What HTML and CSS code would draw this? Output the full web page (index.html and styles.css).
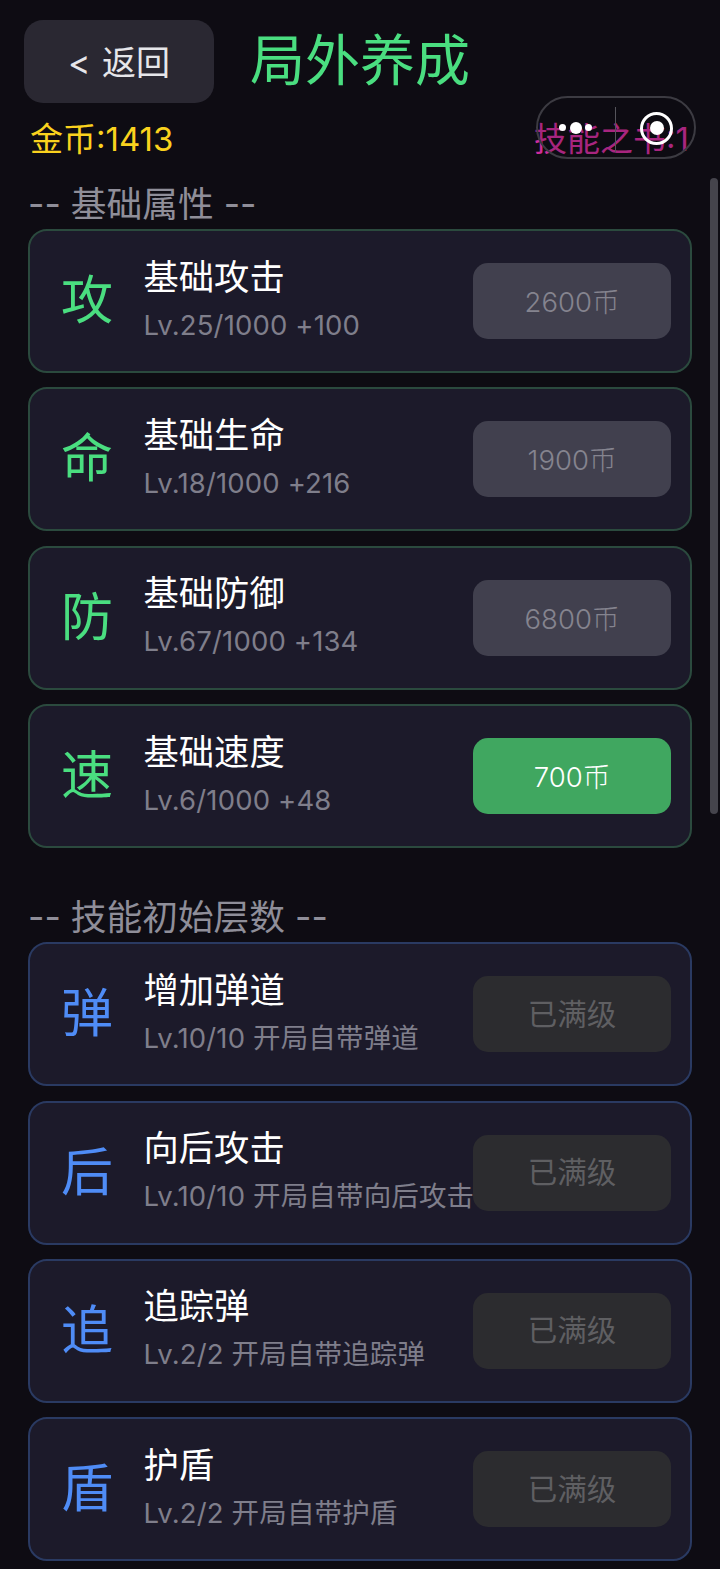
FILE: index.html
```html
<!DOCTYPE html>
<html lang="zh">
<head>
<meta charset="utf-8">
<title>局外养成</title>
<link rel="stylesheet" href="styles.css">
</head>
<body>
<main class="page">
  <header class="top">
    <button class="back">&lt; 返回</button>
    <h1 class="title">局外养成</h1>
  </header>
  <div class="stats">
    <span class="gold">金币:1413</span>
    <span class="books">技能之书:1</span>
  </div>

  <h2 class="section">-- 基础属性 --</h2>
  <section class="list">
    <article class="card base"><div class="glyph">攻</div><div class="info"><div class="name">基础攻击</div><div class="sub">Lv.25/1000 +100</div></div><div class="buy off">2600币</div></article>
    <article class="card base"><div class="glyph">命</div><div class="info"><div class="name">基础生命</div><div class="sub">Lv.18/1000 +216</div></div><div class="buy off">1900币</div></article>
    <article class="card base"><div class="glyph">防</div><div class="info"><div class="name">基础防御</div><div class="sub">Lv.67/1000 +134</div></div><div class="buy off">6800币</div></article>
    <article class="card base"><div class="glyph">速</div><div class="info"><div class="name">基础速度</div><div class="sub">Lv.6/1000 +48</div></div><div class="buy on">700币</div></article>
  </section>

  <h2 class="section second">-- 技能初始层数 --</h2>
  <section class="list">
    <article class="card skill"><div class="glyph">弹</div><div class="info"><div class="name">增加弹道</div><div class="sub">Lv.10/10 开局自带弹道</div></div><div class="buy max">已满级</div></article>
    <article class="card skill"><div class="glyph">后</div><div class="info"><div class="name">向后攻击</div><div class="sub">Lv.10/10 开局自带向后攻击</div></div><div class="buy max">已满级</div></article>
    <article class="card skill"><div class="glyph">追</div><div class="info"><div class="name">追踪弹</div><div class="sub">Lv.2/2 开局自带追踪弹</div></div><div class="buy max">已满级</div></article>
    <article class="card skill"><div class="glyph">盾</div><div class="info"><div class="name">护盾</div><div class="sub">Lv.2/2 开局自带护盾</div></div><div class="buy max">已满级</div></article>
  </section>
</main>

<div class="capsule">
  <div class="dots"><i></i><i class="big"></i><i></i></div>
  <div class="divider"></div>
  <div class="target"><i></i></div>
</div>
<div class="scrollbar"></div>
</body>
</html>
```
FILE: styles.css
```css
* { box-sizing: border-box; }
html, body { margin: 0; height: 1569px; overflow: hidden; background: #0e0c13; }
body { position: relative; font-family: Inter, "Noto Sans CJK SC", sans-serif; font-weight: 300; }
.page { padding: 20px 28px 0; }

.top { display: flex; align-items: center; gap: 36px; margin-left: -4px; }
.back {
  width: 190px; height: 83px; border: 0; border-radius: 19px; padding: 0 0 3px;
  background: #2a2832; color: #e6e6ea;
  font: 400 34px Inter, "Noto Sans CJK SC", sans-serif;
  word-spacing: 2px;
}
.title { margin: -4px 0 0; color: #4ade80; font-size: 55px; font-weight: 400; line-height: 80px; }

.stats { display: flex; justify-content: space-between; align-items: center; height: 46px; margin-top: 11px; padding: 0 2px; }
.gold { color: #fad21e; font-size: 33px; font-weight: 400; }
.books { color: #d02c9c; font-size: 33px; font-weight: 400; margin-right: 1px; }

.section { margin: 20px 0 1px; color: #8f8e99; font-size: 35.7px; font-weight: 400; line-height: 48px; height: 48px; }
.section.second { margin-top: 45px; }

.list { display: flex; flex-direction: column; gap: 14.4px; }
.card {
  display: flex; align-items: center; height: 144px;
  padding: 0 19px 0 0; background: #1c1a2a; border: 2px solid #2b4a3e; border-radius: 19px;
}
.card.skill { border-color: #2a3a62; }
.glyph { flex: none; width: 113.5px; padding-left: 31px; font-size: 52px; line-height: 60px; font-weight: 400; }
.base .glyph { color: #4ade80; }
.skill .glyph { color: #4f8cf6; }
.info { flex: 1; min-width: 0; padding-bottom: 3px; overflow: hidden; white-space: nowrap; }
.name { color: #fff; font-size: 35.3px; line-height: 44px; font-weight: 400; }
.sub { color: #7f7e8b; font-size: 27.5px; font-weight: 400; letter-spacing: .15px; line-height: 38px; margin-top: 6px; }
.buy {
  flex: none; display: flex; align-items: center; justify-content: center;
  width: 198px; height: 76px; border-radius: 15px; font-size: 27.5px; padding-bottom: 2px;
}
.buy.off { background: #41404e; color: #85848f; }
.buy.on { background: #40a760; color: #fff; }
.buy.max { background: #2c2c2f; color: #5f5f62; font-size: 29.5px; font-weight: 400; padding-bottom: 5px; }

.capsule {
  position: absolute; left: 536px; top: 96px; width: 160px; height: 63px;
  display: flex; align-items: center; border: 2px solid #3c3b42; border-radius: 32px; background: rgba(10, 9, 13, .2);
}
.dots { width: 54px; display: flex; justify-content: flex-end; align-items: center; gap: 3.5px; margin-top: 0; }
.dots i { width: 7px; height: 7px; border-radius: 50%; background: #fff; }
.dots i.big { width: 12px; height: 12px; }
.divider { width: 1px; height: 45px; margin-left: 23px; margin-top: 4px; background: #55545b; }
.target {
  width: 33px; height: 33px; margin-left: 24px; margin-top: 1px; border: 3.5px solid #fff; border-radius: 50%;
  display: flex; align-items: center; justify-content: center;
}
.target i { width: 14px; height: 14px; border-radius: 50%; background: #fff; }

.scrollbar { position: absolute; left: 710px; top: 178px; width: 8px; height: 636px; border-radius: 4px; background: #45444c; }
```
